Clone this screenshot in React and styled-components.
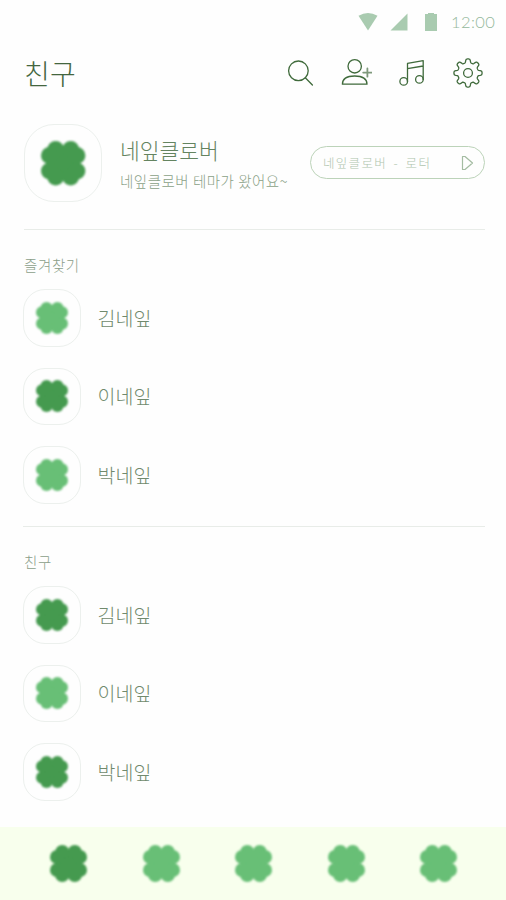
import React from "react";
import styled, { createGlobalStyle } from "styled-components";

const GlobalStyle = createGlobalStyle`
  * {
    box-sizing: border-box;
  }

  body {
    margin: 0;
    background: #fefefe;
    font-family: "Noto Sans CJK KR", "Noto Sans", sans-serif;
    font-weight: 300;
  }
`;

const Screen = styled.div`
  display: flex;
  flex-direction: column;
  width: 506px;
  height: 900px;
  overflow: hidden;
  white-space: nowrap;
`;

const StatusBar = styled.div`
  display: flex;
  align-items: center;
  justify-content: flex-end;
  height: 44px;
  padding-right: 11px;
`;

const StatusIcons = styled.svg`
  width: 82px;
  height: 22px;
  margin-right: 11px;
  fill: #a9cbb0;
`;

const Clock = styled.span`
  width: 44px;
  font-family: Lato, sans-serif;
  font-size: 16.5px;
  font-weight: 300;
  line-height: 22px;
  letter-spacing: 0.4px;
  color: #94b89b;
`;

const Header = styled.header`
  display: flex;
  align-items: center;
  justify-content: space-between;
  height: 58px;
  padding: 0 22px 0 24px;
`;

const Title = styled.h1`
  margin: 0;
  font-size: 28px;
  font-weight: 300;
  line-height: 40px;
  letter-spacing: 0.3px;
  color: #44663f;
`;

const HeaderIcons = styled.div`
  display: flex;
  gap: 24px;
`;

const Icon = styled.svg`
  width: 32px;
  height: 32px;
  fill: none;
  stroke: #3f6a3b;
  stroke-width: 1.3;
  stroke-linecap: round;
  stroke-linejoin: round;
`;

const Profile = styled.section`
  display: flex;
  align-items: center;
  height: 128px;
  margin: 0 21px 0 24px;
  padding-bottom: 5px;
  border-bottom: 1px solid #e8ece8;
`;

const Avatar = styled.div`
  display: flex;
  align-items: center;
  justify-content: center;
  flex: none;
  width: ${(props) => props.$size}px;
  height: ${(props) => props.$size}px;
  border: 1px solid #ecf0ed;
  border-radius: ${(props) => (props.$size > 60 ? 30 : 22)}px;
`;

const CloverSvg = styled.svg`
  display: block;
  overflow: visible;
  fill: ${(props) => (props.$dark ? "#459a4f" : "#68bf76")};
  filter: blur(0.8px);
`;

const ProfileText = styled.div`
  width: 189px;
  margin-left: 18px;
`;

const ProfileName = styled.div`
  font-size: 21.5px;
  line-height: 32px;
  color: #648460;
`;

const ProfileMessage = styled.div`
  font-size: 14.5px;
  line-height: 22px;
  letter-spacing: 0.5px;
  padding-top: 4px;
  color: #8aa187;
`;

const MusicPill = styled.div`
  display: flex;
  align-items: center;
  justify-content: space-between;
  width: 175px;
  height: 33px;
  margin-left: auto;
  margin-top: -1px;
  padding: 0 10px 0 12px;
  border: 1.5px solid #bcd3b9;
  border-radius: 17px;
  font-size: 12.5px;
  letter-spacing: 1.3px;
  word-spacing: 2.5px;
  color: #b0c5ae;

  svg {
    width: 13px;
    height: 16px;
    fill: none;
    stroke: #a4bca2;
    stroke-width: 1.2;
    stroke-linejoin: round;
  }
`;

const Section = styled.section`
  height: ${(props) => props.$height}px;
  margin: 0 21px 0 23px;
  padding-top: 23px;
  border-bottom: ${(props) => (props.$divided ? "1px solid #e8ece8" : "none")};
`;

const SectionTitle = styled.h2`
  margin: 0 0 13px 1px;
  font-size: 14.5px;
  font-weight: 300;
  line-height: 23px;
  letter-spacing: 0.6px;
  color: #8b9f89;
`;

const FriendList = styled.div`
  display: flex;
  flex-direction: column;
  gap: 21px;
`;

const Friend = styled.div`
  display: flex;
  align-items: center;
  gap: 17px;
  font-size: 19.5px;
  line-height: 28px;
  color: #708a6d;
`;

const TabBar = styled.nav`
  display: flex;
  align-items: center;
  justify-content: space-between;
  height: 73px;
  margin-top: auto;
  padding: 0 49px 0 50px;
  background: #f8ffed;
`;

const lobes = [
  [7.5, 13.7],
  [13.7, 7.8],
];

const signs = [
  [1, 1],
  [1, -1],
  [-1, 1],
  [-1, -1],
];

const Clover = ({ size, dark }) => (
  <CloverSvg $dark={dark} width={size} height={size} viewBox="-22.2 -22.2 44.4 44.4">
    <rect x="-16" y="-16" width="32" height="32" rx="2" />
    {lobes.map(([x, y]) =>
      signs.map(([sx, sy]) => (
        <circle key={`${x}${sx}${sy}`} cx={x * sx} cy={y * sy} r="8.5" />
      ))
    )}
  </CloverSvg>
);

// Gear outline with eight rounded teeth, centred on 16,16
const gearPath = () => {
  const points = [];
  for (let i = 0; i <= 160; i++) {
    const angle = (i / 160) * Math.PI * 2;
    const wave = Math.cos(angle * 8);
    const radius = 12.2 + 1.9 * Math.tanh(wave * 2.2);
    points.push(
      `${(16 + radius * Math.sin(angle)).toFixed(2)} ${(16 - radius * Math.cos(angle)).toFixed(2)}`
    );
  }
  return `M${points.join("L")}Z`;
};

const favorites = [
  { name: "김네잎", dark: false },
  { name: "이네잎", dark: true },
  { name: "박네잎", dark: false },
];

const friends = [
  { name: "김네잎", dark: true },
  { name: "이네잎", dark: false },
  { name: "박네잎", dark: true },
];

const tabs = ["friends", "chats", "views", "shopping", "more"];

const FriendSection = ({ title, people, height, divided }) => (
  <Section $height={height} $divided={divided}>
    <SectionTitle>{title}</SectionTitle>
    <FriendList>
      {people.map((person) => (
        <Friend key={person.name}>
          <Avatar $size={57.6}>
            <Clover size={32} dark={person.dark} />
          </Avatar>
          {person.name}
        </Friend>
      ))}
    </FriendList>
  </Section>
);

const App = () => {
  return (
    <>
      <GlobalStyle />
      <Screen>
        <StatusBar>
          <StatusIcons viewBox="0 0 82 22">
            <path d="M0.5 4.7Q10 -0.7 19.5 4.7L10 19.5Z" />
            <path d="M49.5 2.5V19.5H32.5Z" />
            <path d="M67 3H70V2H76V3H79V20H67Z" />
          </StatusIcons>
          <Clock>12:00</Clock>
        </StatusBar>

        <Header>
          <Title>친구</Title>
          <HeaderIcons>
            <Icon viewBox="0 0 32 32">
              <circle cx="14.4" cy="13.8" r="9.8" />
              <path d="M21.3 20.8L28.4 28" />
            </Icon>
            <Icon viewBox="0 0 32 32">
              <circle cx="14.7" cy="9.3" r="6.7" />
              <path d="M2.4 27.2C2.4 22 6.5 19 14.7 19S27 22 27 27.2Z" />
              <path d="M23.2 15.6H31.5M27.4 11.4V19.7" stroke="#7f997c" strokeWidth="1.8" />
            </Icon>
            <Icon viewBox="0 0 32 32">
              <circle cx="7.7" cy="24.4" r="3.8" />
              <circle cx="23.4" cy="22.4" r="3.8" />
              <path d="M11.5 24.4V6.4L27.2 3.6V22.4M11.5 11.7L27.2 9" />
            </Icon>
            <Icon viewBox="0 0 32 32">
              <path d={gearPath()} />
              <circle cx="16" cy="16" r="4.4" />
            </Icon>
          </HeaderIcons>
        </Header>

        <Profile>
          <Avatar $size={78}>
            <Clover size={44.4} dark />
          </Avatar>
          <ProfileText>
            <ProfileName>네잎클로버</ProfileName>
            <ProfileMessage>네잎클로버 테마가 왔어요~</ProfileMessage>
          </ProfileText>
          <MusicPill>
            네잎클로버 - 로터
            <svg viewBox="0 0 13 16">
              <path d="M1.5 1.5V14.5H4L11.5 8L4 1.5Z" />
            </svg>
          </MusicPill>
        </Profile>

        <FriendSection title="즐겨찾기" people={favorites} height={297} divided />
        <FriendSection title="친구" people={friends} height={290} />

        <TabBar>
          {tabs.map((tab, index) => (
            <Clover key={tab} size={37} dark={index === 0} />
          ))}
        </TabBar>
      </Screen>
    </>
  );
};

export default App;
